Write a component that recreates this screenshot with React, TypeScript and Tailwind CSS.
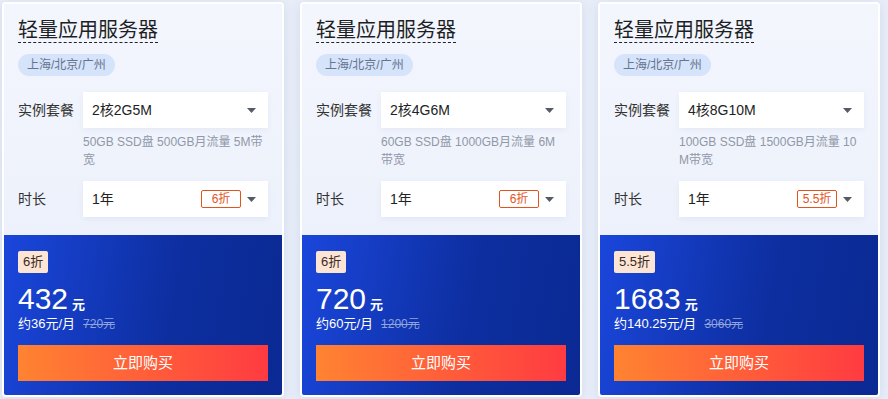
import { ReactNode } from 'react';

interface Plan {
    spec: string;
    desc: string;
    discount: string;
    price: string;
    monthly: string;
    original: string;
}

const plans: Plan[] = [
    { spec: '2核2G5M', desc: '50GB SSD盘 500GB月流量 5M带宽', discount: '6折', price: '432', monthly: '约36元/月', original: '720元' },
    { spec: '2核4G6M', desc: '60GB SSD盘 1000GB月流量 6M带宽', discount: '6折', price: '720', monthly: '约60元/月', original: '1200元' },
    { spec: '4核8G10M', desc: '100GB SSD盘 1500GB月流量 10M带宽', discount: '5.5折', price: '1683', monthly: '约140.25元/月', original: '3060元' },
];

function Caret() {
    return (
        <svg width="9" height="5" viewBox="0 0 9 5" className="shrink-0">
            <path d="M0 0h9L4.5 5z" fill="#555b66" />
        </svg>
    );
}

function Row({ label, children }: { label: string; children: ReactNode }) {
    return (
        <div className="flex items-center">
            <span className="w-[65px] shrink-0 text-[14px] text-[#333]">{label}</span>
            <div className="flex h-[36px] flex-1 items-center bg-white pr-[12px] pl-[9px] shadow-[0_2px_6px_rgba(40,70,140,0.06)]">
                {children}
            </div>
        </div>
    );
}

function PlanCard({ plan }: { plan: Plan }) {
    return (
        <div className="flex w-[282px] flex-col overflow-hidden rounded-[4px] border-[2px] border-white shadow-[0_2px_12px_rgba(60,90,160,0.12)]">
            <div className="bg-[linear-gradient(180deg,#f3f6fd,#edf1fb)] px-[14px] pt-[14px] pb-[18px]">
                <div>
                    <span className="inline-block border-b border-dashed border-[#222] text-[20px] leading-[24px] text-[#1d1f24]">
                        轻量应用服务器
                    </span>
                </div>
                <div className="mt-[10px] inline-flex h-[22px] items-center rounded-full bg-[#d5e3fb] px-[9px] text-[12px] text-[#66748c]">
                    上海/北京/广州
                </div>
                <div className="mt-[16px]">
                    <Row label="实例套餐">
                        <span className="flex-1 text-[14px] text-[#222]">{plan.spec}</span>
                        <Caret />
                    </Row>
                </div>
                <p className="mt-[5px] ml-[65px] text-[12px] leading-[18px] break-all text-[#8f98a8]">{plan.desc}</p>
                <div className="mt-[12px]">
                    <Row label="时长">
                        <span className="flex-1 text-[14px] text-[#222]">1年</span>
                        <span className="mr-[6px] flex h-[18px] min-w-[40px] items-center justify-center rounded-[2px] border border-[#e0541e] px-[4px] text-[12px] text-[#e0541e]">
                            {plan.discount}
                        </span>
                        <Caret />
                    </Row>
                </div>
            </div>
            <div className="flex-1 bg-[linear-gradient(100deg,#1a46db,#0d2e9f_60%,#0a2993)] px-[14px] pt-[14px] pb-[14px]">
                <span className="inline-flex h-[22px] items-center rounded-[2px] bg-[#fde5d6] px-[5px] text-[13px] text-[#3a2a22]">
                    {plan.discount}
                </span>
                <div className="mt-[10px] flex items-baseline text-white">
                    <span className="text-[30px] leading-[32px]">{plan.price}</span>
                    <span className="ml-[4px] text-[13px] font-bold">元</span>
                </div>
                <div className="flex items-center text-[13px] leading-[18px]">
                    <span className="text-white">{plan.monthly}</span>
                    <span className="ml-[8px] text-[12px] text-[#8fa3dc] line-through">{plan.original}</span>
                </div>
                <button className="mt-[12px] flex h-[36px] w-full items-center justify-center bg-[linear-gradient(90deg,#ff8331,#ff3b41)] text-[15px] text-white">
                    立即购买
                </button>
            </div>
        </div>
    );
}

export default function App() {
    return (
        <div
            className="flex h-[399px] w-[888px] gap-[16px] bg-[#e8edf8] pt-[2px] pl-[2px]"
            style={{ fontFamily: '"Liberation Sans", "Noto Sans CJK SC", sans-serif' }}
        >
            {plans.map((p) => (
                <div key={p.spec} className="flex h-[395px]">
                    <PlanCard plan={p} />
                </div>
            ))}
        </div>
    );
}
